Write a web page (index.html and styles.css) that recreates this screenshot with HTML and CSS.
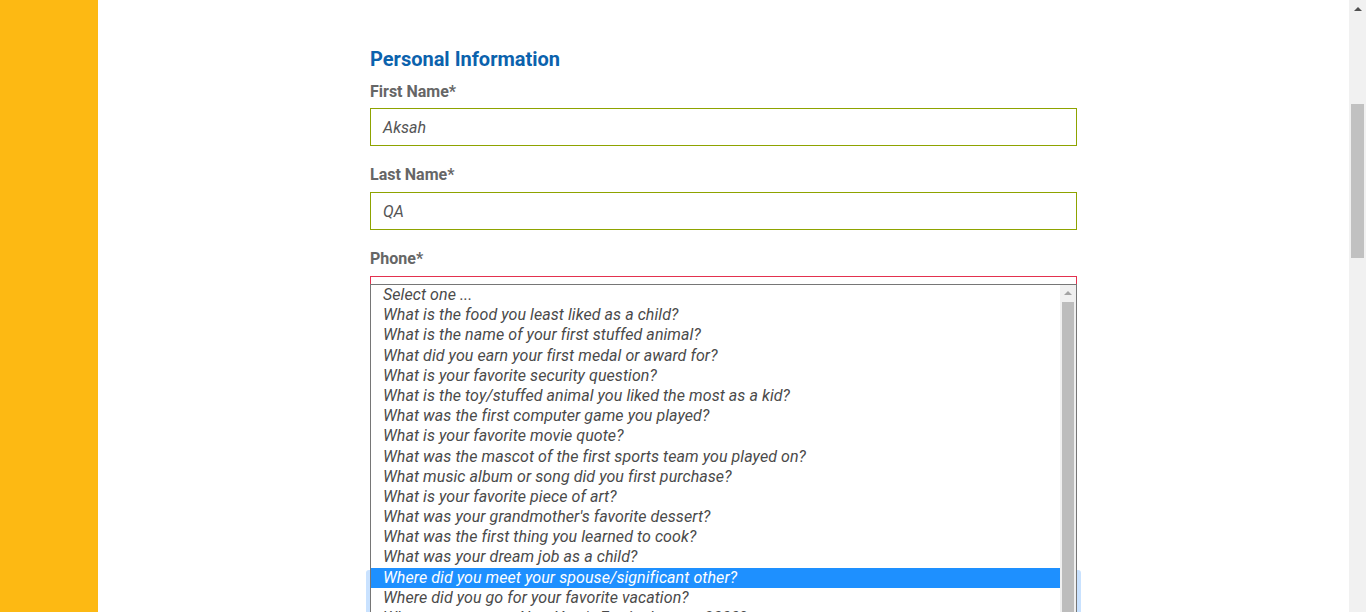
FILE: index.html
```html
<!DOCTYPE html>
<html>
<head>
<meta charset="utf-8">
<link rel="stylesheet" href="styles.css">
</head>
<body>
<div class="page">
  <aside class="sidebar"></aside>
  <main class="main">
    <div class="form">
      <h2 class="heading">Personal Information</h2>
      <div class="field first">
        <label class="label">First Name*</label>
        <div class="input valid">Aksah</div>
      </div>
      <div class="field">
        <label class="label">Last Name*</label>
        <div class="input valid">QA</div>
      </div>
      <div class="field phone">
        <label class="label">Phone*</label>
        <div class="input invalid"></div>
        <div class="listbox">
          <ul class="options">
            <li>Select one ...</li>
            <li>What is the food you least liked as a child?</li>
            <li>What is the name of your first stuffed animal?</li>
            <li>What did you earn your first medal or award for?</li>
            <li>What is your favorite security question?</li>
            <li>What is the toy/stuffed animal you liked the most as a kid?</li>
            <li>What was the first computer game you played?</li>
            <li>What is your favorite movie quote?</li>
            <li>What was the mascot of the first sports team you played on?</li>
            <li>What music album or song did you first purchase?</li>
            <li>What is your favorite piece of art?</li>
            <li>What was your grandmother's favorite dessert?</li>
            <li>What was the first thing you learned to cook?</li>
            <li>What was your dream job as a child?</li>
            <li class="selected">Where did you meet your spouse/significant other?</li>
            <li>Where did you go for your favorite vacation?</li>
            <li>Where were you on New Year's Eve in the year 2000?</li>
          </ul>
          <div class="lb-scroll">
            <div class="arrow-up"></div>
            <div class="lb-thumb"></div>
          </div>
        </div>
      </div>
      <div class="focus-ring">
        <div class="select-box"></div>
      </div>
    </div>
  </main>
  <div class="scrollbar">
    <div class="arrow-up page-arrow"></div>
    <div class="thumb"></div>
  </div>
</div>
</body>
</html>
```

FILE: styles.css
```css
* { box-sizing: border-box; }
html, body { margin: 0; padding: 0; height: 612px; overflow: hidden; }
body { font-family: Roboto, "Liberation Sans", Arial, sans-serif; background: #fff; }

.page { display: flex; height: 612px; }
.sidebar { width: 98px; flex: none; background: #fdb913; }
.main { flex: 1; padding-left: 272px; padding-top: 47px; overflow: hidden; }
.form { width: 707px; }

.heading {
  margin: 0 0 11px;
  font-size: 20px;
  line-height: 24px;
  font-weight: 700;
  color: #0b62ad;
}

.field { margin-bottom: 19px; }
.label {
  display: block;
  font-size: 16px;
  line-height: 20px;
  font-weight: 700;
  color: #666;
  margin-bottom: 7px;
}
.field.first .label { margin-bottom: 6px; }
.input {
  height: 38px;
  padding: 1px 12px 0;
  font-size: 16px;
  line-height: 36px;
  font-style: italic;
  color: #555;
  border: 1px solid #8ea300;
  background: #fff;
}
.input.invalid { border-color: #e3314f; }

.phone { position: relative; }
.listbox {
  position: absolute;
  left: 0;
  top: 35px;
  width: 707px;
  height: 400px;
  border: 1px solid #767676;
  background: #fff;
  display: flex;
  z-index: 2;
}
.options {
  list-style: none;
  margin: 0;
  padding: 0;
  flex: 1;
}
.options li {
  height: 20.2px;
  line-height: 20.2px;
  padding-left: 12px;
  font-size: 16px;
  font-style: italic;
  letter-spacing: 0.07px;
  color: #4a4a4a;
  white-space: nowrap;
}
.options li.selected { background: #1e90ff; color: #fff; }

.lb-scroll {
  width: 16px;
  flex: none;
  background: #f0f0f0;
  display: flex;
  flex-direction: column;
  align-items: center;
  padding-top: 6px;
}
.arrow-up {
  width: 0; height: 0;
  border-left: 4px solid transparent;
  border-right: 4px solid transparent;
  border-bottom: 4px solid #a3a3a3;
}
.lb-thumb {
  margin-top: 7px;
  width: 12px;
  flex: 1;
  background: #bdbdbd;
}

.focus-ring {
  margin-left: -4px;
  margin-top: 256px;
  width: 715px;
  height: 60px;
  border: 4px solid #c9e2ff;
  border-radius: 3px;
}
.select-box { height: 100%; border: 1px solid #888; }

.scrollbar {
  width: 17px;
  flex: none;
  background: #f1f1f1;
  display: flex;
  flex-direction: column;
  align-items: center;
  padding-top: 7px;
}
.page-arrow { border-bottom-color: #505050; }
.thumb {
  margin-top: 93px;
  width: 13px;
  height: 154px;
  background: #c1c1c1;
}
```
